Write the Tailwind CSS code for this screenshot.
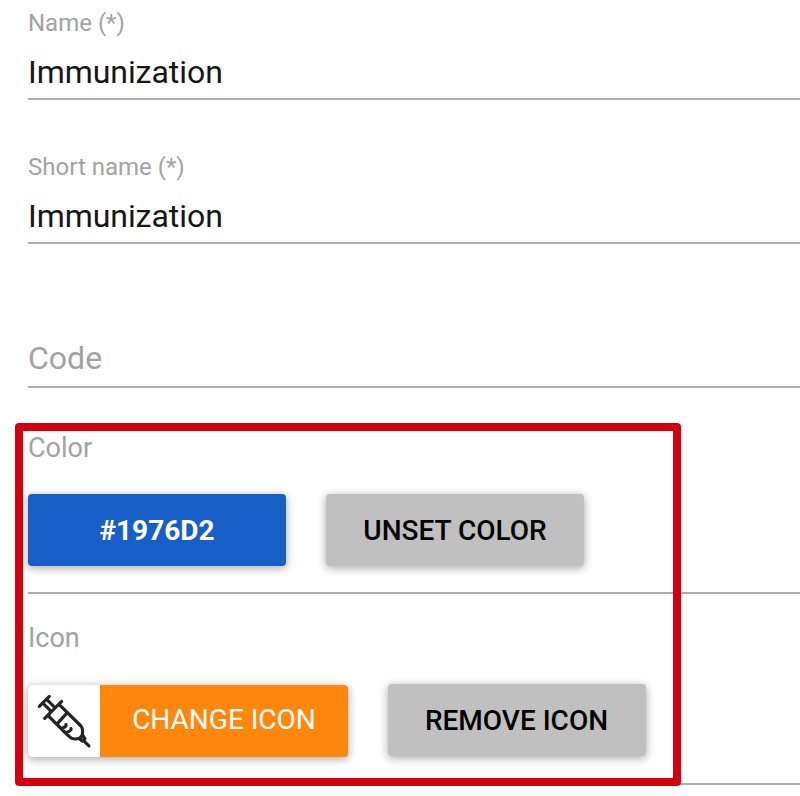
<!DOCTYPE html>
<html lang="en">
<head>
<meta charset="utf-8">
<title>Program details</title>
<script src="https://cdn.jsdelivr.net/npm/@tailwindcss/browser@4"></script>
</head>
<body class="bg-[#fefefe] font-['Roboto',sans-serif] text-[#a3a3a3]">
<main class="relative flex h-[796px] w-[800px] flex-col overflow-hidden pl-7">
  <section class="flex h-[100px] flex-col border-b-2 border-[#adadad] pt-2">
    <label class="text-[24px] leading-[30px]"><span>Name (*)</span></label>
    <div class="mt-[14px] text-[32px] leading-10 tracking-[-0.05px] text-[#161616]"><span>Immunization</span></div>
  </section>
  <section class="flex h-36 flex-col border-b-2 border-[#adadad] pt-[52px]">
    <label class="text-[24px] leading-[30px]"><span>Short name (*)</span></label>
    <div class="mt-[14px] text-[32px] leading-10 tracking-[-0.05px] text-[#161616]"><span>Immunization</span></div>
  </section>
  <section class="flex h-36 flex-col border-b-2 border-[#adadad] pt-[94px]">
    <label class="text-[32px] leading-10"><span>Code</span></label>
  </section>
  <section class="flex h-[206px] flex-col border-b-2 border-[#adadad] pt-11">
    <label class="text-[27px] leading-8"><span>Color</span></label>
    <div class="mt-[30px] flex gap-10 text-[28px] font-medium">
      <button class="h-[72px] w-[258px] rounded bg-[#175fc7] pt-0.5 font-bold text-white shadow-[0_2px_10px_rgba(0,0,0,0.16),0_2px_8px_rgba(0,0,0,0.2)]"><span>#1976D2</span></button>
      <button class="h-[72px] w-[258px] rounded bg-[#c0c0c0] pt-0.5 text-black shadow-[0_2px_10px_rgba(0,0,0,0.16),0_2px_8px_rgba(0,0,0,0.2)]"><span>UNSET COLOR</span></button>
    </div>
  </section>
  <section class="flex h-[191px] flex-col border-b-2 border-[#adadad] pt-7">
    <label class="text-[27px] leading-8"><span>Icon</span></label>
    <div class="mt-[30px] flex gap-10 text-[28px]">
      <button class="mt-px flex h-[72px] w-80 overflow-hidden rounded bg-[#ff870d] text-white shadow-[0_2px_10px_rgba(0,0,0,0.16),0_2px_8px_rgba(0,0,0,0.2)]">
        <svg class="size-[72px] bg-white" viewBox="24 27 216 216" fill="none" stroke="#242424" stroke-width="9.5" stroke-linecap="round" stroke-linejoin="round">
          <path d="M58 91 88 61M68 81 91 104M80 70 103 93M74 127 125 76M87 114V122L146 180Q155 190 169 189L178 187Q188 181 188 169Q189 157 183 150L117 85M112 143 140 112M125 157 134 153Q139 151 138 146M138 170 147 166Q154 163 153 158M177 187 187 195M188 178 195 188M193 196 207 210"/>
          <circle cx="186" cy="188" r="5.5" stroke-width="7"/>
        </svg>
        <div class="flex h-[69px] flex-1 items-center justify-center"><span>CHANGE ICON</span></div>
      </button>
      <button class="h-[72px] w-[258px] rounded bg-[#c0c0c0] pt-0.5 pr-px font-medium text-black shadow-[0_2px_10px_rgba(0,0,0,0.16),0_2px_8px_rgba(0,0,0,0.2)]"><span>REMOVE ICON</span></button>
    </div>
  </section>
  <div class="pointer-events-none absolute left-[15px] top-[423px] h-[363px] w-[666px] rounded-[4px] border-8 border-[#d3000f]"></div>
</main>
</body>
</html>
